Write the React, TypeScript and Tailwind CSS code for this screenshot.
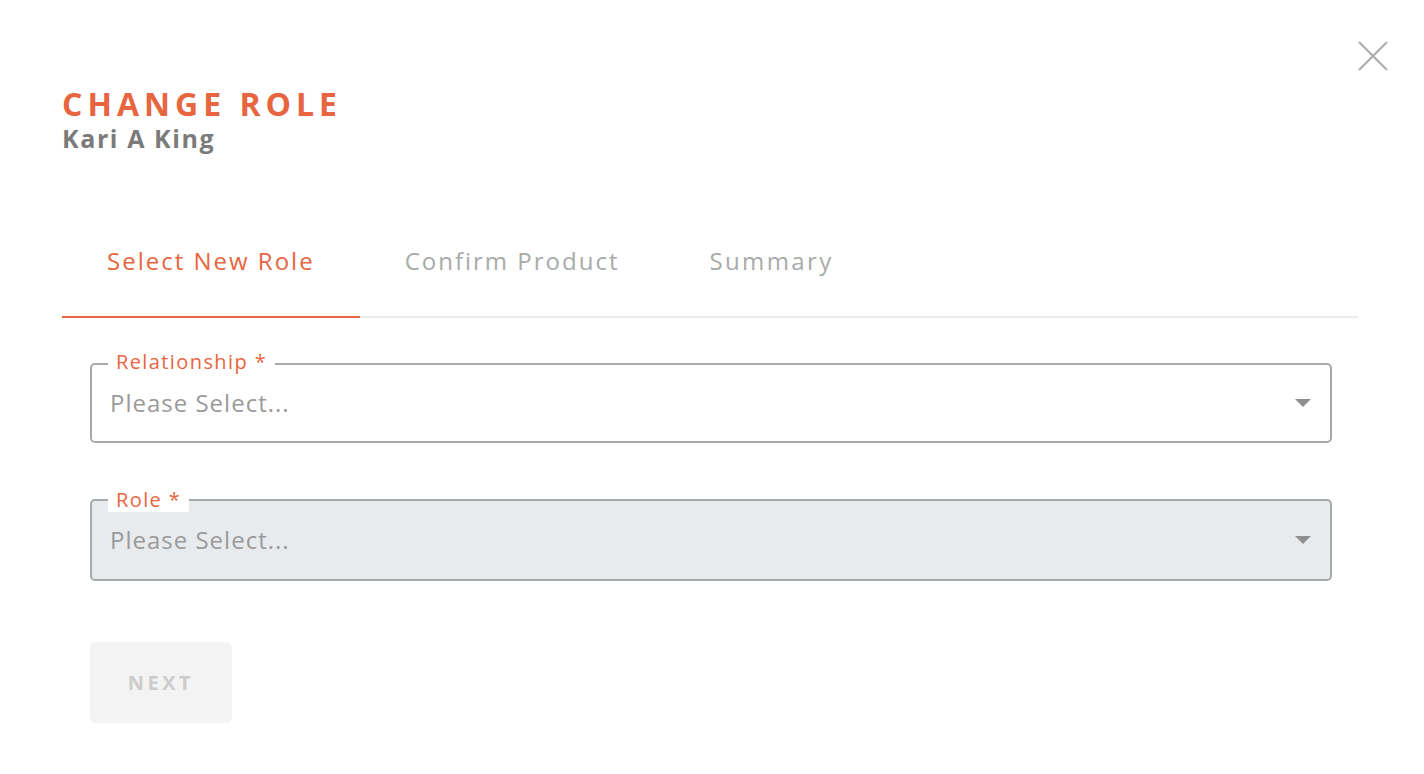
export default function App() {
  const font = { fontFamily: '"Open Sans", "Liberation Sans", sans-serif' };

  return (
    <div className="relative min-h-[774px] w-full bg-white" style={font}>
      <button className="absolute right-[36px] top-[41px] h-[30px] w-[30px]" aria-label="Close">
        <svg viewBox="0 0 30 30" className="h-[30px] w-[30px]" fill="none" stroke="#a9abab" strokeWidth="2">
          <path d="M1 1 L29 29 M29 1 L1 29" />
        </svg>
      </button>

      <div className="pl-[62px] pr-[66px] pt-[86px]">
        <h1 className="text-[32px] font-bold leading-[36px] tracking-[5px] text-[#e7653f]">CHANGE ROLE</h1>
        <div className="mt-[2px] text-[25px] font-bold leading-[28px] tracking-[1.6px] text-[#7b7b7b]">Kari A King</div>

        <div className="mt-[54px] flex border-b-2 border-[#ececec]">
          <div className="-mb-[2px] border-b-2 border-[#e7653f] px-[45px] pb-[40px] pt-[40px] text-[24px] leading-[30px] tracking-[2px] text-[#e7653f]">
            Select New Role
          </div>
          <div className="px-[45px] pb-[40px] pt-[40px] text-[24px] leading-[30px] tracking-[2px] text-[#a6aba9]">
            Confirm Product
          </div>
          <div className="px-[45px] pb-[40px] pt-[40px] text-[24px] leading-[30px] tracking-[2.4px] text-[#a6aba9]">
            Summary
          </div>
        </div>

        <div className="pl-[28px] pr-[26px] pt-[45px]">
          <div className="relative flex h-[80px] items-center justify-between rounded-[5px] border-2 border-[#a5aaaa] bg-white pl-[18px] pr-[19px]">
            <span className="absolute left-[16px] top-[-15px] bg-white px-[8px] text-[20px] leading-[24px] tracking-[1.4px] text-[#e7653f]">
              Relationship *
            </span>
            <span className="text-[24px] tracking-[1px] text-[#9a9a9a]">Please Select...</span>
            <svg width="16" height="8" viewBox="0 0 16 8">
              <path d="M0 0 H16 L8 8 Z" fill="#8f8f8f" />
            </svg>
          </div>

          <div className="relative mt-[56px] flex h-[82px] items-center justify-between rounded-[5px] border-2 border-[#a5aaaa] bg-[#e8ebee] pl-[18px] pr-[19px]">
            <span className="absolute left-[16px] top-[-13px] bg-white px-[8px] text-[20px] leading-[24px] tracking-[1.4px] text-[#e7653f]">
              Role *
            </span>
            <span className="text-[24px] tracking-[1px] text-[#9a9a9a]">Please Select...</span>
            <svg width="16" height="8" viewBox="0 0 16 8">
              <path d="M0 0 H16 L8 8 Z" fill="#8f8f8f" />
            </svg>
          </div>

          <button className="mt-[61px] h-[81px] w-[142px] rounded-[6px] bg-[#f3f3f3] text-[20px] font-bold tracking-[3.5px] text-[#cccccc]">
            NEXT
          </button>
        </div>
      </div>
    </div>
  );
}
